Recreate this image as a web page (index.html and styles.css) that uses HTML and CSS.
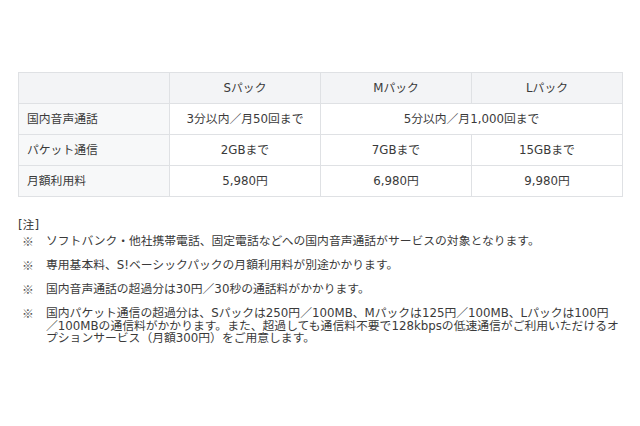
FILE: index.html
```html
<!DOCTYPE html>
<html lang="ja">
<head>
<meta charset="utf-8">
<link rel="stylesheet" href="styles.css">
</head>
<body>
<div class="page">
  <table class="plans">
    <thead>
      <tr>
        <th class="corner"></th>
        <th>Sパック</th>
        <th>Mパック</th>
        <th>Lパック</th>
      </tr>
    </thead>
    <tbody>
      <tr>
        <th class="label">国内音声通話</th>
        <td>3分以内／月50回まで</td>
        <td colspan="2">5分以内／月1,000回まで</td>
      </tr>
      <tr>
        <th class="label">パケット通信</th>
        <td>2GBまで</td>
        <td>7GBまで</td>
        <td>15GBまで</td>
      </tr>
      <tr>
        <th class="label">月額利用料</th>
        <td>5,980円</td>
        <td>6,980円</td>
        <td>9,980円</td>
      </tr>
    </tbody>
  </table>

  <div class="notes">
    <p class="notes-title">[注]</p>
    <div class="note"><span class="mark">※</span><span class="text">ソフトバンク・他社携帯電話、固定電話などへの国内音声通話がサービスの対象となります。</span></div>
    <div class="note"><span class="mark">※</span><span class="text">専用基本料、S!ベーシックパックの月額利用料が別途かかります。</span></div>
    <div class="note"><span class="mark">※</span><span class="text">国内音声通話の超過分は30円／30秒の通話料がかかります。</span></div>
    <div class="note"><span class="mark">※</span><span class="text">国内パケット通信の超過分は、Sパックは250円／100MB、Mパックは125円／100MB、Lパックは100円<br>／100MBの通信料がかかります。また、超過しても通信料不要で128kbpsの低速通信がご利用いただけるオ<br>プションサービス（月額300円）をご用意します。</span></div>
  </div>
</div>
</body>
</html>
```

FILE: styles.css
```css
html, body {
  margin: 0;
  padding: 0;
  background: #ffffff;
}

body {
  font-family: "DejaVu Sans", "Noto Sans CJK JP", sans-serif;
  font-size: 11.8px;
  color: #3a3a3a;
}

.page {
  width: 640px;
  height: 426px;
  padding: 72px 0 0 18px;
  box-sizing: border-box;
}

.plans {
  border-collapse: collapse;
  table-layout: fixed;
  width: 601px;
}

.plans th,
.plans td {
  border: 1px solid #dfe1e4;
  height: 30px;
  padding: 0;
  font-weight: normal;
  text-align: center;
  vertical-align: middle;
  width: 150px;
  line-height: 14px;
}

.plans thead th {
  background: #f3f4f6;
}

.plans th.label {
  text-align: left;
  padding-left: 8px;
  background: #f7f8f9;
}

.plans td {
  background: #ffffff;
}

.notes {
  margin-top: 21px;
}

.notes-title {
  margin: 0 0 3px 0;
  line-height: 14px;
}

.note {
  display: flex;
  line-height: 12.5px;
  margin-bottom: 11.5px;
}

.mark {
  width: 24px;
  flex: none;
  padding-left: 4px;
  color: #555;
  font-family: "Noto Sans CJK JP", sans-serif;
}

.text {
  flex: none;
  white-space: nowrap;
}
```
